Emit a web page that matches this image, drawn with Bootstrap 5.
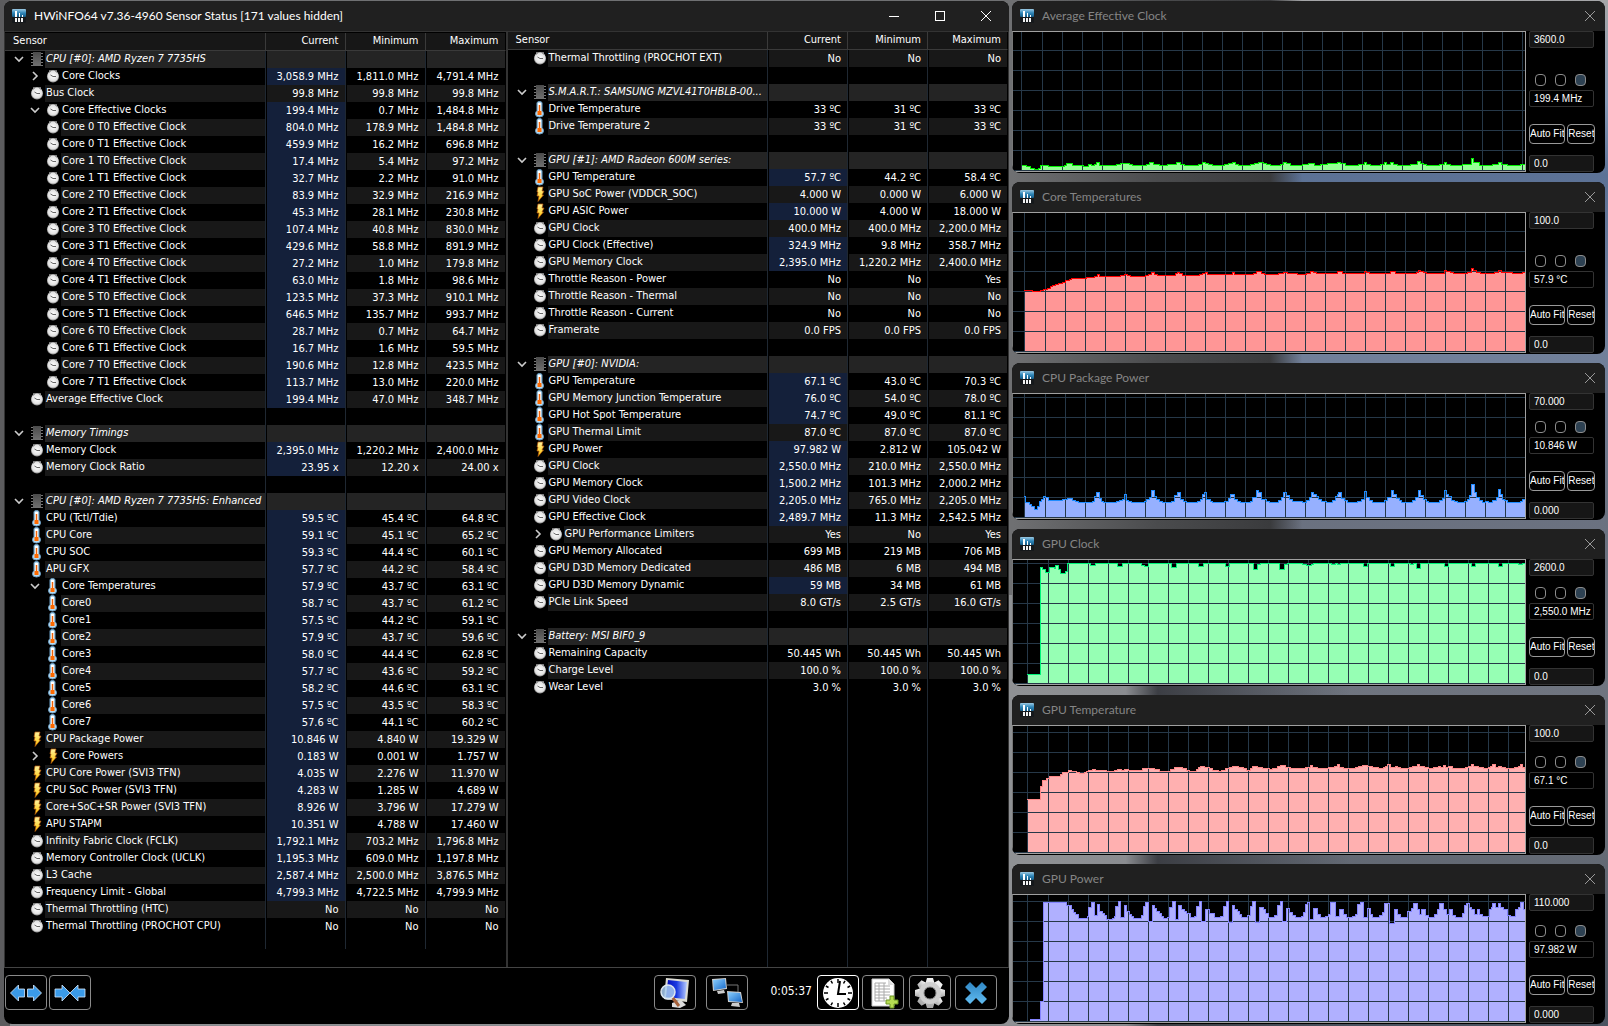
<!DOCTYPE html>
<html lang="en" data-bs-theme="dark">
<head>
<meta charset="utf-8">
<meta name="viewport" content="width=device-width, initial-scale=1">
<title>HWiNFO64 Sensor Status</title>
<link href="https://cdn.jsdelivr.net/npm/bootstrap@5.3.0/dist/css/bootstrap.min.css" rel="stylesheet">
<style>
  :root { --ui: Lato, "Open Sans", sans-serif; --grid: "DejaVu Sans Condensed", "DejaVu Sans", sans-serif; --small: "Liberation Sans", Arial, sans-serif; }
  body { font-family: var(--ui); color: #fff; overflow: hidden;
    background: linear-gradient(90deg, #5c5c5e 0, #5c5c5e 10px, transparent 10px),
      linear-gradient(90deg, #6f7072 63%, #4a4b4d 72%, #3a3b3d 79%, transparent 81%) 0 0 / 100% 58% no-repeat,
      linear-gradient(90deg, #8f9194 63%, #8a8c90 70%, #3c3e44 72%, transparent 84%) 0 100% / 100% 42% no-repeat,
      linear-gradient(180deg, #a5a6a8 0, #8599b5 10%, #5c7296 17%, #71809a 35%, #6a7180 50%, #71767f 75%, #4b5360 100%); }
  .desktop { padding: 1px 3px 2px 4px; gap: 3px; min-height: 100vh; }
  .app { flex: 1005 1 0; border-radius: 8px; background: #000; }
  .monitors { flex: 593 1 0; gap: 9px; }
  .bar { height: 30px; background: #202020; flex: none; }
  .bar h1, .bar h2 { font-size: 12px; line-height: 28px; font-weight: 400; margin: 0; }
  .bar h2 { color: #858585; }
  .logo { width: 14px; height: 14px; flex: none; }
  .caption { border: 0; background: none; padding: 0; width: 46px; height: 28px; color: #fff; display: grid; place-items: center; }
  .mon .caption { color: #999; width: 31px; }
  .panes { border: 1px solid #333; border-bottom-color: #444; }
  .pane { flex: 500 1 0; }
  .pane-left { border-right: 2px solid #333; padding: 1px 0 18px; }
  .sensors { width: 100%; height: 100%; table-layout: fixed; border-collapse: separate; border-spacing: 0; font-family: var(--grid); font-size: 11px; line-height: 16px; }
  .sensors th { height: 18px; padding: 0 6px 2px 0; font-weight: 400; text-align: right; background: #171717; border-bottom: 1px solid #3a3a3a; border-right: 1px solid #3a3a3a; line-height: 15px; }
  .sensors th:first-child { text-align: left; padding-left: 8px; }
  .sensors th:last-child, .sensors td:last-child { border-right-color: #000; }
  .sensors td { height: 17px; padding: 0 6px 0 0; text-align: right; white-space: nowrap; border-right: 1px solid #1f2832; border-left: 1px solid #000; }
  .sensors td:first-child { padding: 0; border-left: 0; }
  .sensors th.num { width: 80px; }
  .sensors .rest td { height: auto; }
  .name { height: 17px; }
  .name .tag { height: 17px; padding-left: 1px; text-align: left; }
  .odd .tag, .odd td:not(:first-child) { background: #181818; }
  .group .tag, .group td:not(:first-child) { background: #242424; }
  .group .tag { font-style: italic; }
  .sensors tr td.live { background: #14203a; }
  .lead-in { width: 24px; flex: none; display: flex; justify-content: flex-end; padding-right: 5px; }
  .deep .lead-in { width: 40px; }
  .twist { border: 0; background: none; padding: 0; width: 10px; height: 16px; color: #ccc; display: flex; align-items: center; }
  .kind { width: 16px; height: 17px; flex: none; }
  .tools { height: 56px; flex: none; padding: 7px 12px 0 1px; }
  .tool { width: 42px; height: 35px; padding: 0; border: 1px solid #8a8a8a; border-radius: 4px; background: #000; flex: none; display: grid; place-items: center; }
  .tool.on { border: 1px solid #fff; }
  .shrink { margin-left: 2px; }
  .net { margin-left: 10px; }
  .elapsed { font: 12px/32px var(--grid); width: 69px; text-align: right; padding-right: 5px; }
  .log { margin-left: 3px; }
  .cfg { margin-left: 5px; }
  .bye { margin-left: 4px; }
  .mon { border-radius: 8px; background: #000; min-height: 140px; }
  .mon-tall { flex: 172 1 0; } .mon-mid { flex: 157 1 0; } .mon-std { flex: 160 1 0; }
  .plot { flex: 1 1 0; border: 1px solid #a0a0a0; border-left-color: #777; background: #000; margin-bottom: 1px; position: relative; }
  .plot svg { display: block; position: absolute; width: 100%; height: 100%; }
  .side { width: 79px; flex: none; padding: 0 11px 1px 3px; font: 10px/15px var(--small); }
  .side input.box { width: 100%; height: 17px; padding: 0 0 0 4px; border: 1px solid #333; border-radius: 2px; background: #161616; color: #fff; font: 10px/15px var(--small); }
  .side input.now { background: #000; }
  .dots { gap: 9px; height: 12px; padding-left: 6px; margin-bottom: 4px; }
  .dots input { appearance: none; width: 11px; height: 12px; margin: 0; border: 1px solid #8c8c8c; border-radius: 4px; background: #000; }
  .dots input:checked { background: #2d4152; }
  .acts { gap: 2px; margin: 17px -1px 11px 0; }
  .acts button { height: 20px; padding: 0; border: 1px solid #999; border-radius: 4px; background: #000; color: #fff; font: 10px/18px var(--small); overflow: hidden; white-space: nowrap; }
  .fit { flex: 36 1 0; } .rst { flex: 27 1 0; }
</style>
<script src="https://cdn.jsdelivr.net/npm/bootstrap@5.3.0/dist/js/bootstrap.bundle.min.js"></script>
</head>
<body>
<svg width="0" height="0" class="position-absolute" aria-hidden="true">
  <defs>
    <linearGradient id="gBlue" x1="0" y1="0" x2="0" y2="1"><stop offset="0" stop-color="#9cc9e2"/><stop offset=".5" stop-color="#2f86b8"/><stop offset="1" stop-color="#155a85"/></linearGradient>
    <radialGradient id="gDial"><stop offset="0" stop-color="#fff"/><stop offset="1" stop-color="#ddd"/></radialGradient>
    <linearGradient id="gBolt" x1="0" y1="0" x2="0" y2="1"><stop offset="0" stop-color="#fff3a0"/><stop offset="1" stop-color="#ffc400"/></linearGradient>
    <linearGradient id="gChip" x1="0" y1="0" x2="0" y2="1"><stop offset="0" stop-color="#4a4a4a"/><stop offset="1" stop-color="#707070"/></linearGradient>
    <linearGradient id="gScreen" x1="0" y1="0" x2="1" y2="1"><stop offset="0" stop-color="#8cd0ff"/><stop offset="1" stop-color="#1668c8"/></linearGradient>
    <linearGradient id="gDeep" x1="0" y1="0" x2="1" y2="0"><stop offset="0" stop-color="#0008b8"/><stop offset=".5" stop-color="#1a3ae0"/><stop offset="1" stop-color="#b8ccff"/></linearGradient>
    <linearGradient id="gCross" x1="0" y1="0" x2="0" y2="1"><stop offset="0" stop-color="#2f86c4"/><stop offset="1" stop-color="#62bdf2"/></linearGradient>
    <linearGradient id="gSteel" x1="0" y1="0" x2="0" y2="1"><stop offset="0" stop-color="#f4f4f4"/><stop offset="1" stop-color="#a8a8a8"/></linearGradient>
  </defs>
  <symbol id="i-logo" viewBox="0 0 14 14"><rect width="14" height="8" rx="1" fill="url(#gBlue)"/><rect y="8" width="14" height="6" rx="1" fill="#15181b"/><path d="M3 2h2v6H3zM7 4h1v4H7zM10 6h1v2h-1z" fill="#fff"/><path d="M3 9h2v4H3zM6 9h2v4H6zM9 9h2v4H9z" fill="#f2f2f2"/></symbol>
  <symbol id="i-clock" viewBox="0 0 16 17"><path d="M4 2h8v2H4z" fill="#777"/><circle cx="8" cy="8.500" r="6" fill="#999"/><circle cx="8" cy="8" r="5.500" fill="url(#gDial)"/><path d="M5.500 7l2.500 1.500h3" fill="none" stroke="#666"/><path d="M4 4.500 6 3M10 3l2 1.500" stroke="#999"/></symbol>
  <symbol id="i-chip" viewBox="0 0 16 17"><path d="M3 2v13M13 2v13" stroke="#777" stroke-width="2" stroke-dasharray="1 2"/><rect x="4" y="1" width="8" height="14" fill="url(#gChip)"/></symbol>
  <symbol id="i-temp" viewBox="0 0 16 17"><path d="M5 2q0-1.500 2.500-1.500T10 2v7.500q1.500 1.500 1.500 3.500 0 3-4 3t-4-3q0-2 1.500-3.500z" fill="#b9dcf2" stroke="#6c9fc4"/><path d="M7.500 2v9" stroke="#fff" stroke-width="3"/><path d="M7.500 4v8" stroke="#f0640a" stroke-width="1.500"/><rect x="5.500" y="10" width="4" height="4" fill="#ff6a00"/></symbol>
  <symbol id="i-bolt" viewBox="0 0 16 17"><path d="M6 1h5L10 5h2l-2 4h1.500L6 15.500 7 10H5l1-4H5z" fill="url(#gBolt)" stroke="#b5590c" stroke-width=".7"/></symbol>
  <symbol id="i-down" viewBox="0 0 10 10"><path d="M1 3l4 4 4-4" fill="none" stroke="currentColor" stroke-width="1.600"/></symbol>
  <symbol id="i-right" viewBox="0 0 10 10"><path d="M3 1l4 4-4 4" fill="none" stroke="currentColor" stroke-width="1.600"/></symbol>
  <symbol id="i-x" viewBox="0 0 12 12"><path d="M1 1l10 10M11 1 1 11" stroke="currentColor" fill="none"/></symbol>
</svg>

<div class="desktop d-flex">
  <main class="app d-flex flex-column overflow-hidden">
    <header class="bar d-flex align-items-center">
      <svg class="logo ms-2 me-1"><use href="#i-logo"/></svg>
      <h1 class="ps-1 flex-grow-1">HWiNFO64 v7.36-4960 Sensor Status [171 values hidden]</h1>
      <button class="caption" aria-label="Minimize"><svg width="10" height="10"><path d="M0 5.500h10" stroke="#fff"/></svg></button>
      <button class="caption" aria-label="Maximize"><svg width="10" height="10"><rect x=".5" y=".5" width="9" height="9" fill="none" stroke="#fff"/></svg></button>
      <button class="caption" aria-label="Close"><svg width="12" height="12"><use href="#i-x"/></svg></button>
    </header>
    <div class="panes d-flex flex-grow-1">
      <section class="pane pane-left"><table class="sensors" id="left"></table></section>
      <section class="pane"><table class="sensors" id="right"></table></section>
    </div>
    <footer class="tools d-flex align-items-start">
      <button class="tool" aria-label="Expand columns"><svg width="34" height="20" viewBox="0 0 34 20" fill="#3a9ae8" stroke="#d5eaff" stroke-width=".8"><path d="M1.500 10l8-8v4h6v8h-6v4zM32.500 10l-8-8v4h-6v8h6v4z"/></svg></button>
      <button class="tool shrink me-auto" aria-label="Shrink columns"><svg width="34" height="20" viewBox="0 0 34 20" fill="#3a9ae8" stroke="#d5eaff" stroke-width=".8"><path d="M17 10 9 2v4H2v8h7v4zM17 10l8-8v4h7v8h-7v4z"/></svg></button>
      <button class="tool" aria-label="System summary"><svg width="34" height="33" viewBox="0 0 34 33"><path d="M14 27l9-3 5 5-6 3-8-1z" fill="#ddd"/><path d="M8 2l23 2-2 22-23-3z" fill="#dcdcd4"/><path d="M10 4l19 2-2 17-19-2z" fill="url(#gDeep)"/><path d="M14 21l7 9" stroke="#a5603a" stroke-width="3"/><circle cx="10" cy="16" r="7" fill="#a9cdf0" fill-opacity=".85" stroke="#dfe8f0" stroke-width="1.500"/></svg></button>
      <button class="tool net" aria-label="Remote monitoring"><svg width="34" height="33" viewBox="0 0 34 33"><path d="M17 9h11v9" fill="none" stroke="#777"/><path d="M2 3l14-1 1 11-14 2z" fill="#ccc"/><path d="M3 4l12-1 1 9-12 2z" fill="url(#gScreen)"/><path d="M7 15l7-1 1 3-7 1z" fill="#ccc"/><path d="M17 15l14 1 2 11-15-1z" fill="#ccc"/><path d="M18 16l12 1 2 9-13-1z" fill="url(#gScreen)"/><path d="M22 27l7 0 1 4-9-1z" fill="#ccc"/></svg></button>
      <time class="elapsed">0:05:37</time>
      <button class="tool on" aria-label="Reset clock"><svg width="32" height="32" viewBox="-16 -16 32 32"><circle r="15" fill="#fff"/><g stroke="#000" stroke-width="2"><path d="M0-14v4M0 14v-4M14 0h-4M-14 0h4M7-12.100l-1.500 2.600M12.100-7l-2.600 1.500M12.100 7 9.500 5.500M7 12.100 5.500 9.500M-7 12.100l1.500-2.600M-12.100 7l2.600-1.500M-12.100-7l2.600 1.500M-7-12.100l1.500 2.600" stroke-width="1.500"/><path d="M2-12 0 1H8" fill="none"/></g></svg></button>
      <button class="tool log" aria-label="Start logging"><svg width="34" height="33" viewBox="0 0 34 33"><path d="M6 3h17l5 5v22H6z" fill="#fff" stroke="#ccc"/><path d="M22 3v6h6" fill="#ddd"/><path d="M9 7h11M9 10h15M9 13h15M9 16h15M9 19h15M9 22h12M9 25h10M9 7v18M13 7v18M18 7v18" stroke="#aaa" fill="none"/><path d="M24 20h4v4h4v4h-4v4h-4v-4h-4v-4h4z" fill="#b5dc52" stroke="#6a9420"/></svg></button>
      <button class="tool cfg" aria-label="Settings"><svg width="32" height="32" viewBox="-16 -16 32 32"><g fill="url(#gSteel)"><g id="cog"><path d="M-3-15h6l1.500 5h-9zM-3 15h6l1.500-5h-9z"/><path d="M-15-3v6l5 1.500v-9zM15-3v6l-5 1.500v-9z"/></g><use href="#cog" transform="rotate(45)"/></g><circle r="8.500" fill="none" stroke="#cfcfcf" stroke-width="5"/><circle r="6" fill="#000" stroke="#888"/></svg></button>
      <button class="tool bye" aria-label="Close sensors"><svg width="24" height="24" viewBox="0 0 24 24"><path d="M6 1l6 6 6-6 5 5-6 6 6 6-5 5-6-6-6 6-5-5 6-6-6-6z" fill="url(#gCross)"/></svg></button>
    </footer>
  </main>
  <aside class="monitors d-flex flex-column" id="monitors"></aside>
</div>
<script>
// One sensor per line: kind | name | current | minimum | maximum. "*" marks a live value,
// ">" indents one level, "v" and "+" add an open or closed twisty.
const left = `
chip v|CPU [#0]: AMD Ryzen 7 7735HS
clock >+|Core Clocks|*3,058.9 MHz|1,811.0 MHz|4,791.4 MHz
clock|Bus Clock|99.8 MHz|99.8 MHz|99.8 MHz
clock >v|Core Effective Clocks|*199.4 MHz|0.7 MHz|1,484.8 MHz
clock >|Core 0 T0 Effective Clock|*804.0 MHz|178.9 MHz|1,484.8 MHz
clock >|Core 0 T1 Effective Clock|*459.9 MHz|16.2 MHz|696.8 MHz
clock >|Core 1 T0 Effective Clock|*17.4 MHz|5.4 MHz|97.2 MHz
clock >|Core 1 T1 Effective Clock|*32.7 MHz|2.2 MHz|91.0 MHz
clock >|Core 2 T0 Effective Clock|*83.9 MHz|32.9 MHz|216.9 MHz
clock >|Core 2 T1 Effective Clock|*45.3 MHz|28.1 MHz|230.8 MHz
clock >|Core 3 T0 Effective Clock|*107.4 MHz|40.8 MHz|830.0 MHz
clock >|Core 3 T1 Effective Clock|*429.6 MHz|58.8 MHz|891.9 MHz
clock >|Core 4 T0 Effective Clock|*27.2 MHz|1.0 MHz|179.8 MHz
clock >|Core 4 T1 Effective Clock|*63.0 MHz|1.8 MHz|98.6 MHz
clock >|Core 5 T0 Effective Clock|*123.5 MHz|37.3 MHz|910.1 MHz
clock >|Core 5 T1 Effective Clock|*646.5 MHz|135.7 MHz|993.7 MHz
clock >|Core 6 T0 Effective Clock|*28.7 MHz|0.7 MHz|64.7 MHz
clock >|Core 6 T1 Effective Clock|*16.7 MHz|1.6 MHz|59.5 MHz
clock >|Core 7 T0 Effective Clock|*190.6 MHz|12.8 MHz|423.5 MHz
clock >|Core 7 T1 Effective Clock|*113.7 MHz|13.0 MHz|220.0 MHz
clock|Average Effective Clock|*199.4 MHz|47.0 MHz|348.7 MHz
-
chip v|Memory Timings
clock|Memory Clock|*2,395.0 MHz|1,220.2 MHz|2,400.0 MHz
clock|Memory Clock Ratio|*23.95 x|12.20 x|24.00 x
-
chip v|CPU [#0]: AMD Ryzen 7 7735HS: Enhanced
temp|CPU (Tctl/Tdie)|*59.5 ºC|45.4 ºC|64.8 ºC
temp|CPU Core|*59.1 ºC|45.1 ºC|65.2 ºC
temp|CPU SOC|*59.3 ºC|44.4 ºC|60.1 ºC
temp|APU GFX|*57.7 ºC|44.2 ºC|58.4 ºC
temp >v|Core Temperatures|*57.9 ºC|43.7 ºC|63.1 ºC
temp >|Core0|*58.7 ºC|43.7 ºC|61.2 ºC
temp >|Core1|*57.5 ºC|44.2 ºC|59.1 ºC
temp >|Core2|*57.9 ºC|43.7 ºC|59.6 ºC
temp >|Core3|*58.0 ºC|44.4 ºC|62.8 ºC
temp >|Core4|*57.7 ºC|43.6 ºC|59.2 ºC
temp >|Core5|*58.2 ºC|44.6 ºC|63.1 ºC
temp >|Core6|*57.5 ºC|43.5 ºC|58.3 ºC
temp >|Core7|*57.6 ºC|44.1 ºC|60.2 ºC
bolt|CPU Package Power|*10.846 W|4.840 W|19.329 W
bolt >+|Core Powers|*0.183 W|0.001 W|1.757 W
bolt|CPU Core Power (SVI3 TFN)|*4.035 W|2.276 W|11.970 W
bolt|CPU SoC Power (SVI3 TFN)|*4.283 W|1.285 W|4.689 W
bolt|Core+SoC+SR Power (SVI3 TFN)|*8.926 W|3.796 W|17.279 W
bolt|APU STAPM|*10.351 W|4.788 W|17.460 W
clock|Infinity Fabric Clock (FCLK)|*1,792.1 MHz|703.2 MHz|1,796.8 MHz
clock|Memory Controller Clock (UCLK)|*1,195.3 MHz|609.0 MHz|1,197.8 MHz
clock|L3 Cache|*2,587.4 MHz|2,500.0 MHz|3,876.5 MHz
clock|Frequency Limit - Global|*4,799.3 MHz|4,722.5 MHz|4,799.9 MHz
clock|Thermal Throttling (HTC)|No|No|No
clock|Thermal Throttling (PROCHOT CPU)|No|No|No`;
const right = `
clock|Thermal Throttling (PROCHOT EXT)|No|No|No
-
chip v|S.M.A.R.T.: SAMSUNG MZVL41T0HBLB-00...
temp|Drive Temperature|33 ºC|31 ºC|33 ºC
temp|Drive Temperature 2|33 ºC|31 ºC|33 ºC
-
chip v|GPU [#1]: AMD Radeon 600M series:
temp|GPU Temperature|*57.7 ºC|44.2 ºC|58.4 ºC
bolt|GPU SoC Power (VDDCR_SOC)|4.000 W|0.000 W|6.000 W
bolt|GPU ASIC Power|*10.000 W|4.000 W|18.000 W
clock|GPU Clock|400.0 MHz|400.0 MHz|2,200.0 MHz
clock|GPU Clock (Effective)|*324.9 MHz|9.8 MHz|358.7 MHz
clock|GPU Memory Clock|*2,395.0 MHz|1,220.2 MHz|2,400.0 MHz
clock|Throttle Reason - Power|No|No|Yes
clock|Throttle Reason - Thermal|No|No|No
clock|Throttle Reason - Current|No|No|No
clock|Framerate|0.0 FPS|0.0 FPS|0.0 FPS
-
chip v|GPU [#0]: NVIDIA:
temp|GPU Temperature|*67.1 ºC|43.0 ºC|70.3 ºC
temp|GPU Memory Junction Temperature|*76.0 ºC|54.0 ºC|78.0 ºC
temp|GPU Hot Spot Temperature|*74.7 ºC|49.0 ºC|81.1 ºC
temp|GPU Thermal Limit|87.0 ºC|87.0 ºC|87.0 ºC
bolt|GPU Power|*97.982 W|2.812 W|105.042 W
clock|GPU Clock|*2,550.0 MHz|210.0 MHz|2,550.0 MHz
clock|GPU Memory Clock|*1,500.2 MHz|101.3 MHz|2,000.2 MHz
clock|GPU Video Clock|*2,205.0 MHz|765.0 MHz|2,205.0 MHz
clock|GPU Effective Clock|*2,489.7 MHz|11.3 MHz|2,542.5 MHz
clock >+|GPU Performance Limiters|Yes|No|Yes
clock|GPU Memory Allocated|699 MB|219 MB|706 MB
clock|GPU D3D Memory Dedicated|486 MB|6 MB|494 MB
clock|GPU D3D Memory Dynamic|*59 MB|34 MB|61 MB
clock|PCIe Link Speed|8.0 GT/s|2.5 GT/s|16.0 GT/s
-
chip v|Battery: MSI BIF0_9
clock|Remaining Capacity|50.445 Wh|50.445 Wh|50.445 Wh
clock|Charge Level|100.0 %|100.0 %|100.0 %
clock|Wear Level|3.0 %|3.0 %|3.0 %`;

function fillTable(id, text) {
  const rows = text.trim().split('\n').map((line, i) => {
    if (line === '-') return '<tr><td></td><td></td><td></td><td></td></tr>';
    const [head, name, ...vals] = line.split('|');
    const [kind, flags = ''] = head.split(' ');
    const deep = flags.includes('>') ? ' deep' : '';
    const open = flags.includes('v'), shut = flags.includes('+');
    const twisty = open || shut ? `<button class="twist" aria-label="${open ? 'Collapse' : 'Expand'} ${name}" aria-expanded="${open}"><svg width="10" height="10"><use href="#i-${open ? 'down' : 'right'}"/></svg></button>` : '';
    const cells = [0, 1, 2].map(k => {
      const v = vals[k] || '';
      return v[0] === '*' ? `<td class="live">${v.slice(1)}</td>` : `<td>${v}</td>`;
    }).join('');
    const cls = kind === 'chip' ? 'group' : i % 2 ? '' : 'odd';
    return `<tr class="${cls}"><td><div class="name d-flex${deep}"><span class="lead-in">${twisty}</span><svg class="kind"><use href="#i-${kind}"/></svg><span class="tag flex-grow-1">${name}</span></div></td>${cells}</tr>`;
  }).join('');
  document.getElementById(id).innerHTML = `<thead><tr><th>Sensor</th><th class="num">Current</th><th class="num">Minimum</th><th class="num">Maximum</th></tr></thead><tbody>${rows}<tr class="rest"><td></td><td></td><td></td><td></td></tr></tbody>`;
}
fillTable('left', left);
fillTable('right', right);

// Each trace is a list of "x:y" steps; the value holds until the next x.
const monitors = [
 { t: 'Average Effective Clock', s: 'tall', max: '3600.0', now: '199.4 MHz', min: '0.0', h: 141, gx: 9, gy: 19, fill: '#96ff96', line: '#00f000',
   d: '10:134 14:135 18:137 22:138 26:137 28:134 36:135 52:134 54:132 60:134 71:135 76:133 79:134 82:133 84:131 87:134 104:133 108:132 117:133 120:134 134:133 137:131 141:133 147:134 155:133 164:131 168:133 172:134 186:133 190:131 193:132 196:133 200:134 212:133 216:132 220:131 223:133 226:134 238:133 242:132 246:131 251:132 254:133 258:134 268:133 271:131 274:132 278:134 290:133 296:132 302:134 308:133 315:132 325:131 328:132 333:134 346:133 352:131 354:133 358:134 368:133 372:131 374:133 378:131 381:133 385:134 398:133 405:130 408:132 411:133 414:134 427:133 432:131 434:133 438:134 450:133 459:127 461:131 467:134 480:133 486:131 489:133 495:134 508:133' },
 { t: 'Core Temperatures', s: 'tall', max: '100.0', now: '57.9 °C', min: '0.0', h: 141, gx: 12, gy: 19, fill: '#ff9696', line: '#ff0000',
   d: '12:78 20:79 28:78 31:77 35:76 38:74 40:73 43:72 46:71 50:70 53:68 57:67 59:66 74:65 82:64 85:62 87:64 108:63 112:62 115:63 118:64 133:63 136:62 139:60 142:62 145:63 163:61 165:60 167:61 170:63 187:62 190:61 193:60 195:62 215:62 220:60 222:62 241:61 244:59 249:61 252:62 266:61 271:60 275:61 285:62 294:61 298:59 301:60 304:61 325:59 330:61 352:59 354:60 357:61 378:59 383:61 404:60 406:58 408:59 411:60 414:61 432:58 434:59 438:60 441:61 455:60 459:56 461:58 464:60 468:61 482:60 486:58 489:60 500:61 510:60' },
 { t: 'CPU Package Power', s: 'mid', max: '70.000', now: '10.846 W', min: '0.000', h: 126, gx: 12, gy: 4, fill: '#96b0ff', line: '#1e8cff',
   d: '12:103 13:109 17:111 19:113 22:116 25:113 27:108 29:106 31:103 33:104 36:107 50:106 55:105 60:107 63:108 66:109 80:108 82:103 84:99 87:105 89:108 91:109 104:108 107:107 110:106 112:101 114:107 116:108 119:109 132:108 134:106 137:104 139:97 142:103 144:106 147:108 150:109 159:108 162:102 165:99 168:106 171:108 174:109 185:108 188:106 190:101 192:99 194:106 198:108 200:109 212:108 216:105 218:101 222:106 225:108 228:109 238:108 240:104 244:97 246:99 249:106 254:108 257:109 266:107 269:104 271:99 274:102 277:106 280:108 290:109 294:107 297:104 299:99 301:101 304:103 306:106 309:108 314:109 320:107 323:103 325:101 326:99 329:105 332:107 335:109 345:108 349:106 352:98 354:104 357:107 360:109 372:107 375:104 379:97 381:101 384:105 387:107 389:109 400:107 403:104 406:97 408:102 411:106 414:108 416:109 427:107 430:105 432:97 434:101 436:103 439:107 442:108 445:109 452:108 455:106 457:102 459:91 462:99 464:104 467:107 470:109 473:108 476:109 480:107 484:104 486:96 488:101 490:106 492:107 495:109 508:108 510:106' },
 { t: 'GPU Clock', s: 'mid', max: '2600.0', now: '2,550.0 MHz', min: '0.0', h: 126, gx: 15, gy: 4, fill: '#96ffb4', line: '#00f57a',
   d: '15:115 28:8 30:10 33:13 37:8 42:9 43:6 46:10 48:14 53:12 55:4 78:6 83:4 105:7 110:4 129:6 132:7 136:4 159:8 164:4 186:7 191:4 213:7 217:4 241:10 245:5 248:4 267:10 272:5 275:4 290:5 294:6 299:5 301:4 319:5 323:4 325:5 328:4 351:7 355:4 378:7 382:4 398:5 401:4 404:9 408:4 432:7 436:4 459:7 463:4 486:7 490:4 506:5 510:4' },
 { t: 'GPU Temperature', s: 'std', max: '100.0', now: '67.1 °C', min: '0.0', h: 129, gx: 15, gy: 7, fill: '#ffb0b0', line: '#ff8a8a',
   d: '15:74 28:61 30:55 34:53 37:51 48:49 50:47 56:45 59:46 64:47 67:48 72:47 74:46 76:45 80:44 83:45 94:46 102:45 105:44 109:45 112:44 116:45 130:43 142:44 147:46 158:44 162:42 170:43 174:45 177:46 184:44 186:42 188:41 192:42 197:43 200:45 206:46 209:45 213:43 217:42 220:41 226:42 231:43 234:45 238:43 240:41 245:42 250:43 257:44 260:43 265:41 268:40 273:42 278:43 293:42 298:40 300:42 305:43 316:42 322:41 325:39 327:42 331:43 343:42 346:41 350:40 355:41 360:42 366:43 371:42 373:41 375:39 378:42 383:41 385:42 388:43 397:42 400:41 405:39 407:41 412:42 416:43 421:42 426:41 428:42 431:40 433:42 436:41 440:43 453:42 456:41 459:39 461:41 466:42 471:43 476:42 478:41 480:39 483:42 486:41 489:42 493:43 502:42 506:41 508:39 510:42 512:43' },
 { t: 'GPU Power', s: 'std', max: '110.000', now: '97.982 W', min: '0.000', h: 129, gx: 15, gy: 7, fill: '#b0b0ff', line: '#8484ff',
   d: '18:125 28:107 31:8 54:11 59:15 61:18 63:20 66:24 75:22 76:13 79:8 82:21 85:10 87:17 90:19 92:21 94:25 100:24 102:22 103:12 106:7 108:23 112:11 114:17 117:20 119:22 121:24 129:21 131:12 133:8 136:27 140:11 142:14 144:17 147:19 149:22 151:24 155:23 157:13 160:7 163:25 166:11 169:15 172:17 174:19 178:23 182:22 184:12 187:7 189:27 193:15 197:19 202:23 208:22 211:12 214:7 216:28 220:11 222:15 225:17 227:20 229:23 235:21 238:12 240:7 243:28 247:13 251:15 253:19 256:23 262:21 265:11 268:7 270:27 274:14 277:18 280:21 283:23 289:22 291:18 293:10 295:8 297:25 301:14 305:20 308:23 313:22 316:20 318:8 323:22 327:15 331:20 334:23 340:22 343:20 345:10 348:8 351:23 355:14 358:20 360:23 367:21 370:18 372:9 377:29 382:15 385:20 388:23 395:17 399:14 401:9 405:15 407:20 409:15 413:21 416:23 422:20 425:15 427:9 431:15 434:20 437:15 440:21 443:23 450:19 452:11 454:9 457:13 459:15 462:20 465:15 467:20 470:22 477:15 479:13 480:9 483:13 486:9 488:13 491:15 495:21 498:22 503:15 506:13 508:8 511:15' }
];

document.getElementById('monitors').innerHTML = monitors.map((m, i) => {
  const W = 514, steps = m.d.split(' ').map(p => p.split(':').map(Number));
  let edge = `M${steps[0][0]} ${steps[0][1]}.5`;
  steps.slice(1).forEach(([x, y]) => { edge += `H${x}V${y}.5`; });
  edge += `H${W}`;
  let grid = '';
  for (let y = m.gy; y < m.h; y += 20) grid += `M0 ${y}.5H${W}`;
  for (let k = 0, x = m.gx; x < W; k++) { grid += `M${x}.5 0V${m.h}`; x += k ? 20 : 21; }
  return `<section class="mon mon-${m.s} d-flex flex-column overflow-hidden">
    <header class="bar d-flex align-items-center"><svg class="logo ms-2 me-1"><use href="#i-logo"/></svg><h2 class="ps-1 flex-grow-1">${m.t}</h2>
      <button class="caption" aria-label="Close ${m.t}"><svg width="12" height="12"><use href="#i-x"/></svg></button></header>
    <div class="d-flex flex-grow-1">
      <div class="plot"><svg viewBox="1 1 ${W - 2} ${m.h - 2}" preserveAspectRatio="none" shape-rendering="crispEdges" role="img" aria-label="${m.t} graph">
        <path d="${edge}V${m.h - 2}H${steps[0][0]}z" fill="${m.fill}"/><path d="${grid}" stroke="#263848" fill="none"/><path d="${edge}" stroke="${m.line}" fill="none"/></svg></div>
      <div class="side d-flex flex-column">
        <input class="box" aria-label="${m.t} upper limit" value="${m.max}">
        <div class="flex-grow-1"></div>
        <div class="dots d-flex">${[0, 1, 2].map(k => `<input type="radio" name="mode${i}" aria-label="Mode ${k + 1}"${k === 2 ? ' checked' : ''}>`).join('')}</div>
        <input class="box now" aria-label="${m.t} now" value="${m.now}" readonly>
        <div class="acts d-flex"><button class="fit">Auto Fit</button><button class="rst">Reset</button></div>
        <input class="box" aria-label="${m.t} lower limit" value="${m.min}">
      </div>
    </div>
  </section>`;
}).join('');
</script>
</body>
</html>
